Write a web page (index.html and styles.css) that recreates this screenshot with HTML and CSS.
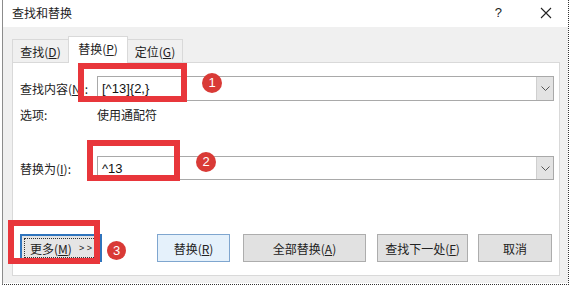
FILE: index.html
```html
<!DOCTYPE html>
<html lang="zh-CN">
<head>
    <meta charset="UTF-8">
    <title>查找和替换</title>
    <link rel="stylesheet" href="styles.css">
</head>
<body>
<div class="page">
    <div class="window">
        <div class="titlebar">
            <span class="title">查找和替换</span>
            <span class="help">?</span>
            <svg class="close" width="12" height="12" viewBox="0 0 12 12">
                <path d="M1 1 L11 11 M11 1 L1 11" stroke="#222" stroke-width="1.1" fill="none"/>
            </svg>
        </div>

        <div class="dialog">
            <!-- tabs -->
            <div class="tabs">
                <div class="tab tab-find">查找(<u>D</u>)</div>
                <div class="tab tab-replace active">替换(<u>P</u>)</div>
                <div class="tab tab-goto">定位(<u>G</u>)</div>
            </div>

            <div class="panel">
                <div class="field">
                    <label class="label">查找内容(<u>N</u>):</label>
                    <div class="combo">
                        <span class="combo-text">[^13]{2,}</span>
                        <span class="combo-btn">
                            <svg width="9" height="5" viewBox="0 0 9 5"><path d="M0.5 0.5 L4.5 4.5 L8.5 0.5" stroke="#555" fill="none"/></svg>
                        </span>
                    </div>
                </div>

                <div class="option-row">
                    <span class="label">选项:</span>
                    <span>使用通配符</span>
                </div>

                <div class="field field-replace">
                    <label class="label">替换为(<u>I</u>):</label>
                    <div class="combo">
                        <span class="combo-text">^13</span>
                        <span class="combo-btn">
                            <svg width="9" height="5" viewBox="0 0 9 5"><path d="M0.5 0.5 L4.5 4.5 L8.5 0.5" stroke="#555" fill="none"/></svg>
                        </span>
                    </div>
                </div>

                <div class="buttons">
                    <button class="btn btn-more"><span class="focus">更多(<u>M</u>)<span class="more-arrows">&gt; &gt;</span></span></button>
                    <button class="btn btn-replace">替换(<u>R</u>)</button>
                    <button class="btn btn-all">全部替换(<u>A</u>)</button>
                    <button class="btn btn-next">查找下一处(<u>F</u>)</button>
                    <button class="btn btn-cancel">取消</button>
                </div>
            </div>
        </div>
    </div>

    <!-- annotations drawn over the dialog -->
    <div class="mark mark-1"></div>
    <div class="mark mark-2"></div>
    <div class="mark mark-3"></div>
    <div class="badge badge-1">1</div>
    <div class="badge badge-2">2</div>
    <div class="badge badge-3">3</div>
</div>
</body>
</html>
```

FILE: styles.css
```css
body {
    margin: 0;
    background-color: #ffffff;
    font-family: "Noto Sans CJK SC", "Liberation Sans", sans-serif;
    font-size: 12px;
    color: #222;
}

.page {
    position: relative;
    width: 570px;
    height: 287px;
    overflow: hidden;
}

.window {
    box-sizing: border-box;
    margin-left: 2px;
    width: 567px;
    height: 285px;
    border-left: 1px solid #8c8c8c;
    border-right: 1px dotted #333;
    border-bottom: 1px dotted #333;
}

.titlebar {
    height: 27px;
    background-color: #ffffff;
    display: flex;
    align-items: center;
    padding-left: 9px;
}

.title {
    flex: 1;
    margin-top: -2px;
}

.help {
    font-family: "Liberation Sans", sans-serif;
    font-size: 13px;
    margin-right: 38px;
    margin-top: -2px;
}

.close {
    margin-right: 16px;
    margin-top: -2px;
}

.dialog {
    background-color: #f0f0f0;
    height: 256px;
    padding: 9px 8px 0 9px;
    box-sizing: border-box;
}

/* Tabs */
.tabs {
    display: flex;
    align-items: flex-end;
    height: 26px;
}

.tab {
    box-sizing: border-box;
    height: 23px;
    border: 1px solid #d9d9d9;
    border-bottom: none;
    display: flex;
    align-items: center;
    justify-content: center;
    background-color: #f0f0f0;
}

.tab-find {
    width: 56px;
    border-right: none;
}

.tab-replace {
    width: 60px;
}

.tab-goto {
    width: 55px;
    border-left: none;
}

.tab.active {
    height: 27px;
    background-color: #ffffff;
    margin-bottom: -1px;
    position: relative;
    z-index: 1;
    padding-bottom: 3px;
}

/* Panel */
.panel {
    box-sizing: border-box;
    height: 214px;
    background-color: #ffffff;
    border: 1px solid #d9d9d9;
    padding: 13px 5px 0 7px;
}

.field {
    display: flex;
    align-items: center;
    height: 25px;
}

.field-replace {
    margin-top: 32px;
    height: 24px;
}

.label {
    width: 77px;
    flex-shrink: 0;
}

.combo {
    flex: 1;
    height: 100%;
    box-sizing: border-box;
    border: 1px solid #a9a9a9;
    display: flex;
    align-items: center;
}

.combo-text {
    flex: 1;
    padding-left: 4px;
    font-family: "Liberation Sans", sans-serif;
    font-size: 13px;
    color: #111;
}

.combo-btn {
    width: 17px;
    height: 100%;
    box-sizing: border-box;
    background-color: #e3e3e3;
    border-left: 1px solid #cfcfcf;
    display: flex;
    align-items: center;
    justify-content: center;
}

.option-row {
    display: flex;
    align-items: center;
    height: 20px;
    margin-top: 3px;
}

/* Buttons */
.buttons {
    display: flex;
    margin-top: 54px;
    height: 28px;
}

.btn {
    box-sizing: border-box;
    height: 28px;
    padding: 0;
    border: 1px solid #adadad;
    background-color: #e1e1e1;
    font-family: "Noto Sans CJK SC", "Liberation Sans", sans-serif;
    font-size: 12px;
    color: #222;
}

.btn-more {
    width: 82px;
    border: 2px solid #2f74bd;
    background-color: #e5e5e5;
    padding: 2px;
}

.btn-more .focus {
    display: flex;
    align-items: center;
    justify-content: center;
    height: 100%;
    border: 1px dotted #333;
    box-sizing: border-box;
}

.more-arrows {
    font-family: "Liberation Sans", sans-serif;
    font-size: 9px;
    margin-left: 7px;
}

.btn-replace {
    width: 73px;
    margin-left: 55px;
    background-color: #e5f1fb;
    border-color: #7fa6cf;
}

.btn-all {
    width: 123px;
    margin-left: 13px;
}

.btn-next {
    width: 91px;
    margin-left: 11px;
}

.btn-cancel {
    width: 74px;
    margin-left: 10px;
}

/* Red annotation boxes and numbered badges */
.mark {
    position: absolute;
    box-sizing: border-box;
    border: 6px solid #e8363b;
}

.mark-1 {
    left: 78px;
    top: 63px;
    width: 109px;
    height: 39px;
}

.mark-2 {
    left: 87px;
    top: 140px;
    width: 93px;
    height: 41px;
}

.mark-3 {
    left: 8px;
    top: 220px;
    width: 92px;
    height: 44px;
}

.badge {
    position: absolute;
    width: 20px;
    height: 20px;
    border-radius: 50%;
    background-color: #d93a36;
    color: #ffffff;
    font-family: "Liberation Sans", sans-serif;
    font-size: 13px;
    line-height: 20px;
    text-align: center;
}

.badge-1 {
    left: 202px;
    top: 73px;
}

.badge-2 {
    left: 196px;
    top: 152px;
}

.badge-3 {
    left: 107px;
    top: 241px;
    width: 19px;
    height: 19px;
    line-height: 19px;
}
```
